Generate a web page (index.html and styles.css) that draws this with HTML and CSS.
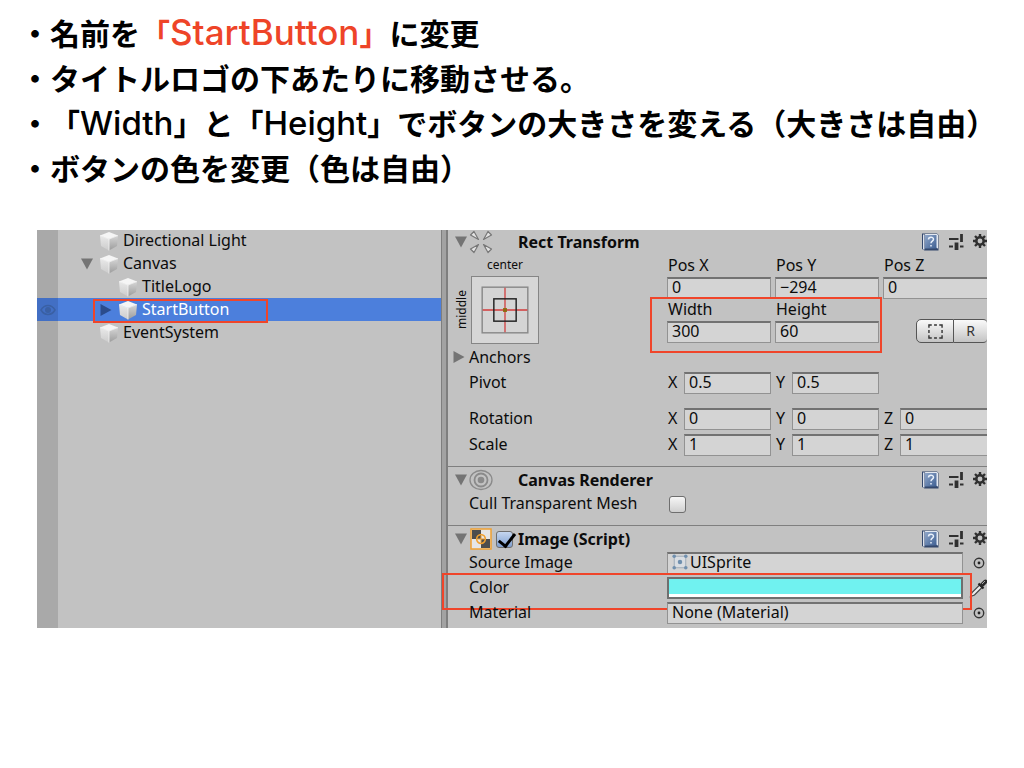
FILE: index.html
```html
<!DOCTYPE html>
<html lang="ja">
<head>
<meta charset="utf-8">
<title>StartButton</title>
<link rel="stylesheet" href="styles.css">
</head>
<body>
<svg class="defs" aria-hidden="true">
  <defs>
    <linearGradient id="bookFill" x1="0" y1="0" x2="1" y2="1"><stop offset="0" stop-color="#8fa6c9"/><stop offset="1" stop-color="#3f6093"/></linearGradient>
    <linearGradient id="cubeLeft" x1="0" y1="0" x2="0" y2="1"><stop offset="0" stop-color="#e9e9e9"/><stop offset="1" stop-color="#cccccc"/></linearGradient>
    <linearGradient id="cubeRight" x1="0" y1="0" x2="0" y2="1"><stop offset="0" stop-color="#d6d6d6"/><stop offset="1" stop-color="#9c9c9c"/></linearGradient>
    <symbol id="cube" viewBox="0 0 20 20">
      <path d="M1 4.500 10 1l9 3.500L10 8z" fill="#f5f5f5"/>
      <path d="M1 4.500 10 8v11.500L2 15z" fill="url(#cubeLeft)"/>
      <path d="M19 4.500 10 8v11.500L18 15z" fill="url(#cubeRight)"/>
      <path d="M1 4.500 10 8l9-3.500M10 8v11.500" fill="none" stroke="#f2f2f2" stroke-width=".8"/>
    </symbol>
    <symbol id="down" viewBox="0 0 12 12"><path d="M0 .5h12L6 11.500z"/></symbol>
    <symbol id="right" viewBox="0 0 12 12"><path d="M.5 0v12L11.500 6z"/></symbol>
    <symbol id="book" viewBox="0 0 18 18">
      <path d="M1 1.500h2.500L4 17 1 15.500z" fill="#1f2c45"/>
      <path d="M1 .5h15l1.500 1.500v15.500H3.500L1 16z" fill="#34486d"/>
      <path d="M3.500 1H16l1 1v13.500l-1.500-.500z" fill="#e3e8f0"/>
      <path d="M2 1.500h1.500v15H2z" fill="#dbe2ee"/>
      <path d="M4 2h11.500v13.500H4z" fill="url(#bookFill)"/>
      <path d="M7.500 6.500c0-3 5-3 5-.2 0 1.900-2.500 1.900-2.500 4M10 12v1.600" fill="none" stroke="#e9f0fa" stroke-width="1.500"/>
    </symbol>
    <symbol id="sliders" viewBox="0 0 16 16">
      <path d="M1 5h9.500M1 12.500h4M12 12.500h3.500" fill="none" stroke="#303030" stroke-width="2.200"/>
      <path d="M13.500 0v8" stroke="#303030" stroke-width="2.800"/>
      <path d="M8.500 8.500V16" stroke="#303030" stroke-width="3.800"/>
    </symbol>
    <symbol id="gear" viewBox="0 0 14 14">
      <circle cx="7" cy="7" r="3.700" fill="none" stroke="#303030" stroke-width="2.500"/>
      <path d="M7 0v3M7 11v3M0 7h3M11 7h3M2 2l2 2M10 10l2 2M2 12l2-2M10 4l2-2" stroke="#303030" stroke-width="2.400"/>
    </symbol>
    <symbol id="picker" viewBox="0 0 12 12">
      <circle cx="6" cy="6" r="4.700" fill="none" stroke="#333" stroke-width="1.400"/><circle cx="6" cy="6" r="1.400" fill="#222"/>
    </symbol>
  </defs>
</svg>

<main class="slide">
  <ul class="notes">
    <li>・名前を<em>「<span class="latin">StartButton</span>」</em>に変更</li>
    <li>・タイトルロゴの下あたりに移動させる。</li>
    <li>・「<span class="latin">Width</span>」と「<span class="latin">Height</span>」でボタンの大きさを変える（大きさは自由）</li>
    <li>・ボタンの色を変更（色は自由）</li>
  </ul>

  <div class="editor">
    <section class="hierarchy" aria-label="Hierarchy">
      <ul class="tree">
        <li class="node"><span class="gutter"></span><span class="twist"></span><svg class="cube"><use href="#cube"/></svg><span class="title">Directional Light</span></li>
        <li class="node"><span class="gutter"></span><button class="twist" aria-label="Collapse Canvas"><svg class="tri"><use href="#down"/></svg></button><svg class="cube"><use href="#cube"/></svg><span class="title">Canvas</span></li>
        <li class="node child"><span class="gutter"></span><span class="twist"></span><svg class="cube"><use href="#cube"/></svg><span class="title">TitleLogo</span></li>
        <li class="node child selected"><span class="gutter"><svg class="eye" viewBox="0 0 16 12"><path d="M1 6c3.500-6 10.500-6 14 0-3.500 6-10.500 6-14 0z" fill="none" stroke="#3a60a4" stroke-width="1.500"/><circle cx="8" cy="6" r="3" fill="#3a60a4"/></svg></span><button class="twist" aria-label="Expand StartButton"><svg class="tri"><use href="#right"/></svg></button><svg class="cube"><use href="#cube"/></svg><span class="title">StartButton</span><i class="mark mark-node"></i></li>
        <li class="node"><span class="gutter"></span><span class="twist"></span><svg class="cube"><use href="#cube"/></svg><span class="title">EventSystem</span></li>
      </ul>
    </section>
    <div class="splitter"></div>

    <section class="inspector" aria-label="Inspector">
      <article class="component transform">
        <header class="head">
          <button class="fold" aria-label="Collapse Rect Transform"><svg class="tri"><use href="#down"/></svg></button>
          <svg class="type" viewBox="0 0 24 24"><g fill="#e4e4e4" stroke="#777" stroke-width="1.200" stroke-linejoin="round"><path d="M1.500 5 5 1.500 9.500 9.500z"/><path d="M22.500 5 19 1.500 14.500 9.500z"/><path d="M1.500 19 5 22.500 9.500 14.500z"/><path d="M22.500 19 19 22.500 14.500 14.500z"/></g></svg>
          <span class="tick"></span>
          <h2>Rect Transform</h2>
          <button class="tool" aria-label="Help"><svg class="book"><use href="#book"/></svg></button>
          <button class="tool" aria-label="Presets"><svg class="sliders"><use href="#sliders"/></svg></button>
          <button class="tool" aria-label="Settings"><svg class="gear"><use href="#gear"/></svg></button>
        </header>
        <div class="rect">
          <div class="preset">
            <span class="preset-h">center</span>
            <span class="preset-v">middle</span>
            <button class="anchor" aria-label="Anchor presets"><svg viewBox="0 0 68 68"><rect x="10.500" y="10.500" width="47" height="47" fill="#d4d4d4" stroke="#8a8a8a" stroke-width="1.500"/><path d="M34 11v46M11 34h46" stroke="#d23b3b" stroke-width="1.300"/><rect x="22.500" y="22.500" width="23" height="23" fill="none" stroke="#222" stroke-width="1.500"/><rect x="32" y="32" width="4" height="4" fill="#8d6a10"/></svg></button>
          </div>
          <div class="fields">
            <label for="px">Pos X</label><label for="py">Pos Y</label><label for="pz">Pos Z</label>
            <input id="px" value="0"><input id="py" value="−294"><input id="pz" class="cut" value="0">
            <div class="size">
              <label for="w">Width</label><label for="h">Height</label>
              <input id="w" value="300"><input id="h" value="60">
              <i class="mark mark-size"></i>
            </div>
            <div class="modes">
              <button aria-label="Blueprint mode"><svg viewBox="0 0 16 16"><path d="M1 4V1h3M12 1h3v3M15 12v3h-3M4 15H1v-3M6.500 1h3M6.500 15h3M1 6.500v3M15 6.500v3" fill="none" stroke="#333" stroke-width="1.500"/></svg></button><button>R</button>
            </div>
          </div>
        </div>
        <div class="row anchors"><button class="fold" aria-label="Expand Anchors"><svg class="tri"><use href="#right"/></svg></button><span>Anchors</span></div>
        <div class="row pivot"><span class="name">Pivot</span><div class="axes"><label>X<input value="0.5"></label><label>Y<input value="0.5"></label></div></div>
        <div class="row rotation"><span class="name">Rotation</span><div class="axes"><label>X<input value="0"></label><label>Y<input value="0"></label><label>Z<input class="cut" value="0"></label></div></div>
        <div class="row"><span class="name">Scale</span><div class="axes"><label>X<input value="1"></label><label>Y<input value="1"></label><label>Z<input class="cut" value="1"></label></div></div>
      </article>

      <article class="component">
        <header class="head">
          <button class="fold" aria-label="Collapse Canvas Renderer"><svg class="tri"><use href="#down"/></svg></button>
          <svg class="type" viewBox="0 0 24 24"><g fill="none" stroke="#8a8a8a"><ellipse cx="12" cy="12" rx="11" ry="9.500" stroke-width="1.300"/><circle cx="12" cy="12" r="6.500" stroke-width="1.800"/></g><circle cx="12" cy="12" r="3.300" fill="#8a8a8a"/></svg>
          <span class="tick"></span>
          <h2>Canvas Renderer</h2>
          <button class="tool" aria-label="Help"><svg class="book"><use href="#book"/></svg></button>
          <button class="tool" aria-label="Presets"><svg class="sliders"><use href="#sliders"/></svg></button>
          <button class="tool" aria-label="Settings"><svg class="gear"><use href="#gear"/></svg></button>
        </header>
        <div class="row"><label class="name" for="cull">Cull Transparent Mesh</label><input class="check" type="checkbox" id="cull"></div>
      </article>

      <article class="component image">
        <header class="head">
          <button class="fold" aria-label="Collapse Image"><svg class="tri"><use href="#down"/></svg></button>
          <svg class="type" viewBox="0 0 24 24"><rect x="2" y="2" width="20" height="20" fill="#e6e6e6" stroke="#f0a030" stroke-width="1.500"/><path d="M3 3h9v9H3zM12 12h9v9h-9z" fill="#4d4d4d"/><circle cx="12" cy="12" r="4.300" fill="none" stroke="#f0a030" stroke-width="1.700"/><path d="M12 9v6M9 12h6" stroke="#f0a030" stroke-width="1"/></svg>
          <span class="tick"><input class="check" type="checkbox" checked aria-label="Image enabled"></span>
          <h2>Image (Script)</h2>
          <button class="tool" aria-label="Help"><svg class="book"><use href="#book"/></svg></button>
          <button class="tool" aria-label="Presets"><svg class="sliders"><use href="#sliders"/></svg></button>
          <button class="tool" aria-label="Settings"><svg class="gear"><use href="#gear"/></svg></button>
        </header>
        <div class="row"><span class="name">Source Image</span><button class="object"><svg class="sprite" viewBox="0 0 18 18"><rect x="2.500" y="2.500" width="13" height="13" fill="#d9dde2" stroke="#9aa7b5"/><g fill="#6f8fae"><circle cx="2.500" cy="2.500" r="2"/><circle cx="15.500" cy="2.500" r="2"/><circle cx="2.500" cy="15.500" r="2"/><circle cx="15.500" cy="15.500" r="2"/><circle cx="9" cy="9" r="2.500"/></g></svg>UISprite</button><button class="pick" aria-label="Select source image"><svg><use href="#picker"/></svg></button></div>
        <div class="row color"><span class="name">Color</span><button class="swatch" aria-label="Color"></button><button class="pick" aria-label="Eyedropper"><svg class="dropper" viewBox="0 0 20 20"><path d="M1.500 18.500 3 14.500l7.500-7.500 2.500 2.500L5.500 17z" fill="#ececec" stroke="#444" stroke-width="1.200"/><path d="M9.500 5.500l5 5" stroke="#222" stroke-width="2.200"/><path d="M13 7l3.500-3.500" stroke="#2a2a2a" stroke-width="4" stroke-linecap="round"/><path d="M13 6l3-3" stroke="#aaa" stroke-width="1"/></svg></button><i class="mark mark-color"></i></div>
        <div class="row"><span class="name">Material</span><button class="object">None (Material)</button><button class="pick" aria-label="Select material"><svg><use href="#picker"/></svg></button></div>
      </article>
    </section>
  </div>
</main>
</body>
</html>
```

FILE: styles.css
```css
* { box-sizing: border-box; }

body {
  margin: 0;
  background: #fff;
  color: #000;
  font-family: "Noto Sans", "Noto Sans CJK JP", sans-serif;
}

ul { margin: 0; padding: 0; list-style: none; }
svg { display: block; flex: none; }
button { margin: 0; padding: 0; border: 0; background: none; color: inherit; font: inherit; }
.defs { position: absolute; width: 0; height: 0; }

.notes {
  padding: 10px 20px 0;
  font-family: "Noto Sans CJK JP", sans-serif;
  font-size: 30px;
  font-weight: 700;
  line-height: 45px;
  text-spacing-trim: space-all;
}
.notes li { height: 45px; white-space: nowrap; }
.notes em { color: #ee4428; font-style: normal; }
.latin { font-family: Inter, sans-serif; font-size: 33px; font-weight: 500; line-height: 40px; }
.notes em .latin { font-size: 35px; }

.editor {
  display: flex;
  margin: 40px 37px 0;
  overflow: hidden;
  background: #c2c2c2;
  color: #0c0c0c;
  font-size: 16px;
  line-height: 22px;
}

.hierarchy {
  flex: 404 1 0;
  background: linear-gradient(to right, #a9a9a9 21px, #c2c2c2 21px);
}
.tree { margin-top: -1px; }
.node { position: relative; display: flex; align-items: center; height: 23px; }
.title { padding-bottom: 2px; line-height: 18px; }
.gutter { width: 40px; padding-left: 3px; }
.eye { width: 16px; height: 12px; }
.twist { display: flex; justify-content: center; width: 22px; padding-right: 2px; }
.node .cube { width: 20px; height: 20px; margin-right: 4px; }
.child .gutter { width: 59px; }
.selected { background: linear-gradient(to right, #426fc4 21px, #4c7fdc 21px); color: #fff; }
.tri { width: 12px; height: 12px; fill: #747474; }
.selected .tri { fill: #2b4c8c; }

.mark { position: absolute; border: 2px solid #f0452a; pointer-events: none; }
.mark-node { left: 56px; top: 1px; width: 175px; height: 24px; }
.mark-size { inset: -2px -3px -10px -17px; }
.mark-color { inset: -4px 15px -11px -6px; }

.splitter {
  width: 7px;
  background: #a2a2a2;
  border: solid #7e7e7e;
  border-width: 0 2px 0 1px;
}

.inspector { flex: 539 1 0; min-width: 0; }
.component { padding-bottom: 10px; border-top: 1px solid #7f7f7f; }
.component.transform { border-top: 0; }
.component.image { display: grid; row-gap: 3px; padding-bottom: 4px; }
.image .head { margin-bottom: -3px; }

.head { display: flex; align-items: center; height: 26px; padding-left: 7px; }
.transform .head { height: 24px; }
.fold { width: 12px; }
.type { width: 24px; height: 24px; margin: 0 3px 0 2px; }
.tick { display: flex; width: 22px; }
.head h2 { flex: 1; margin: 0; font-size: 16px; font-weight: 700; }
.tool { margin-left: 9px; }
.book { width: 18px; height: 18px; }
.sliders { width: 16px; height: 16px; }
.gear { width: 14px; height: 14px; margin-bottom: 2px; }

.rect { display: flex; padding-top: 1px; }
.preset {
  display: grid;
  grid-template: 21px 68px / 15px 68px;
  width: 219px;
  padding-left: 8px;
}
.preset-h { grid-column: 2; font-size: 12px; line-height: 20px; text-align: center; }
.preset-v { width: 12px; font-size: 12px; line-height: 12px; writing-mode: vertical-rl; transform: rotate(180deg); text-align: center; }
.anchor { border: 1px solid #858585; background: #d6d6d6; }

.fields {
  flex: 1;
  display: grid;
  grid-template-columns: repeat(3, 1fr);
  grid-auto-rows: 22px;
  column-gap: 4px;
  min-width: 0;
}
.fields label { padding-left: 1px; line-height: 21px; }
.size {
  position: relative;
  grid-column: span 2;
  grid-row: span 2;
  display: grid;
  grid-template-columns: 1fr 1fr;
  grid-auto-rows: 22px;
  column-gap: 4px;
}
.modes { grid-row: span 2; align-self: end; justify-self: end; display: flex; }
.modes button {
  display: flex;
  align-items: center;
  justify-content: center;
  width: 38px;
  height: 24px;
  border: 1px solid #555;
  border-radius: 5px 0 0 5px;
  background: linear-gradient(#fafafa, #c4c4c4);
  color: #333;
  font-size: 14px;
}
.modes button + button { width: 33px; border-width: 1px 0; border-radius: 0 4px 4px 0; }
.modes svg { width: 15px; height: 15px; }

input {
  min-width: 0;
  width: 100%;
  height: 22px;
  margin: 0;
  padding: 0 4px 3px;
  border: 1px solid #929292;
  border-top: 2px solid #727272;
  border-radius: 0;
  background: #d4d4d4;
  color: #0c0c0c;
  font: inherit;
  line-height: 16px;
}
.cut { border-right: 0; }

.row { position: relative; display: flex; align-items: center; height: 22px; }
.name { width: 219px; padding: 0 0 2px 21px; white-space: nowrap; }
.anchors { margin: 2px 0 4px; padding-left: 5px; }
.anchors .fold { margin-right: 4px; }
.pivot { margin-bottom: 14px; }
.rotation { margin-bottom: 4px; }
.axes { flex: 1; display: grid; grid-template-columns: repeat(3, 1fr); column-gap: 4px; }
.axes label { display: grid; grid-template-columns: 16px 1fr; padding-left: 1px; line-height: 20px; }

.check {
  appearance: none;
  width: 17px;
  height: 17px;
  padding: 0;
  margin-left: 2px;
  border: 1px solid #6e6e6e;
  border-radius: 3px;
  background: linear-gradient(#f6f6f6, #cfcfcf);
}
.tick .check { position: relative; margin-left: 0; background: linear-gradient(#c5d6ef, #7f9fd0); }
.tick .check::after {
  content: "";
  position: absolute;
  left: 5px;
  top: -2px;
  width: 7px;
  height: 14px;
  border: solid #000;
  border-width: 0 3px 3px 0;
  transform: rotate(38deg);
}

.object, .swatch { flex: 1; height: 22px; border: 1px solid #929292; border-top: 2px solid #727272; background: #d4d4d4; }
.object { display: flex; align-items: center; padding: 0 4px 3px; line-height: 16px; }
.sprite { width: 16px; height: 16px; margin-right: 2px; }
.swatch { border: 2px solid #6f6f6f; background: linear-gradient(#70f2f0 15px, #fff 15px); }
.pick { display: flex; justify-content: center; width: 24px; padding-left: 8px; }
.pick svg { width: 12px; height: 12px; }
.pick .dropper { width: 20px; height: 20px; }
```
